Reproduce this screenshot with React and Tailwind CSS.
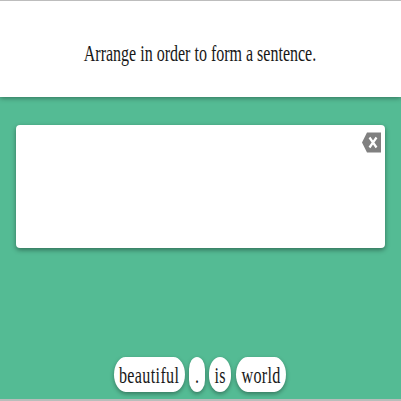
const words = [
  { text: 'beautiful', size: 'w-[71px]' },
  { text: '.', size: 'w-4' },
  { text: 'is', size: 'w-[22px]' },
  { text: 'world', size: 'w-[50px] ml-px' },
];

function Word({ text, size }) {
  return (
    <button
      className={`flex h-[35px] shrink-0 items-center justify-center rounded-[12px/18px] bg-white shadow-[0_2px_4px_rgba(0,0,0,0.35)] ${size}`}
    >
      <span className="scale-x-[0.7] whitespace-nowrap pt-0.5 tracking-[0.5px]">{text}</span>
    </button>
  );
}

export default function App() {
  return (
    <div className="flex h-[401px] w-[401px] flex-col overflow-hidden border-b-2 border-[#b9bdbb] bg-[#54bb94] font-['Liberation_Serif',serif] text-[23px] leading-none text-[#181818]">
      <header className="flex h-[97px] shrink-0 items-center justify-center border-t border-[#bdbdbd] bg-white pr-0.5 pt-2 shadow-[0_1px_5px_rgba(0,0,0,0.4)]">
        <h1 className="scale-x-[0.696] whitespace-nowrap">Arrange in order to form a sentence.</h1>
      </header>
      <main className="flex flex-1 flex-col items-center">
        <section className="mt-7 flex h-[123px] w-[369px] items-start justify-end rounded-[4px] bg-white pr-1 pt-[7px] shadow-[0_2px_5px_rgba(0,0,0,0.4)]">
          <button aria-label="Delete">
            <svg className="block h-[21px] w-[19px]" viewBox="0 0 19 21">
              <path d="M5 0.5H19V20.5H5L0 10.5Z" fill="#808080" />
              <path d="M7.5 5.5L14.5 15.5M14.5 5.5L7.5 15.5" stroke="white" strokeWidth="2.2" />
            </svg>
          </button>
        </section>
        <div className="mr-px mt-[109px] flex justify-center gap-1">
          {words.map((word) => (
            <Word key={word.text} {...word} />
          ))}
        </div>
      </main>
    </div>
  );
}
